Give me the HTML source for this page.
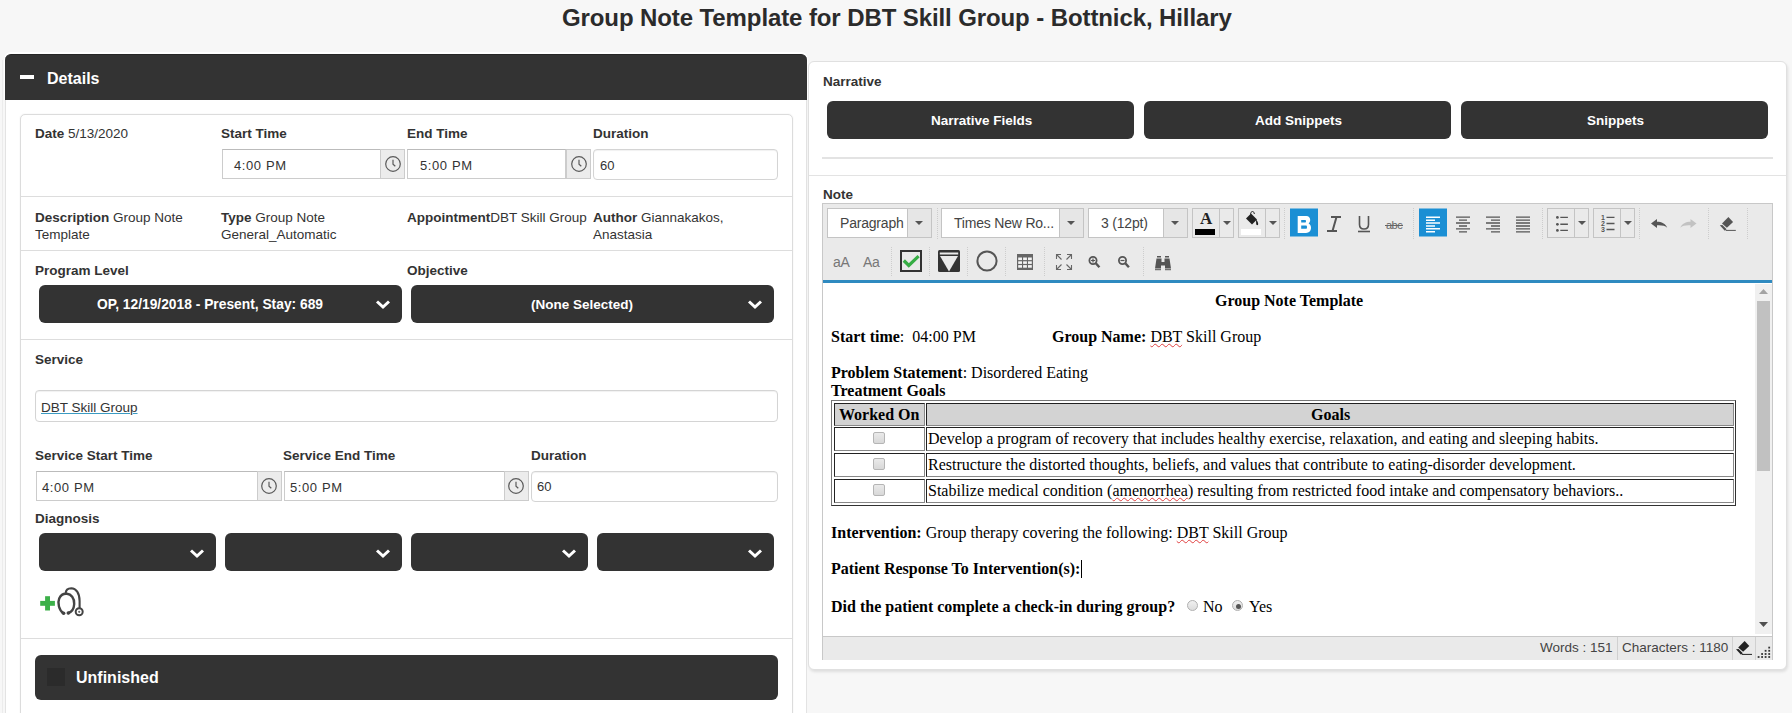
<!DOCTYPE html>
<html><head><meta charset="utf-8">
<style>
*{box-sizing:border-box;margin:0;padding:0}
html,body{width:1792px;height:713px;overflow:hidden;background:#f7f7f7;font-family:"Liberation Sans",sans-serif;color:#333;font-size:13.5px;letter-spacing:0}
.a{position:absolute}
.t{position:absolute;white-space:nowrap;line-height:1}
.b{font-weight:bold}
.title{left:562px;top:6px;font-size:24px;font-weight:bold;color:#2b2b2b;letter-spacing:-0.1px}
.lpanel{left:5px;top:54px;width:802px;height:700px;background:#fff;border:1px solid #e3e3e3;border-radius:6px 6px 0 0}
.lhead{left:5px;top:54px;width:802px;height:46px;background:#333;border-radius:6px 6px 0 0;border-top:1px solid #262626;box-shadow:0 -1px 0 1px #fff}
.card{left:20px;top:114px;width:773px;height:650px;border:1px solid #dcdcdc;border-radius:5px;background:#fff;box-shadow:0 0 2px rgba(0,0,0,.07)}
.sep{position:absolute;height:1px;background:#ddd}
.inp{position:absolute;background:#fff;border:1px solid #ccc;border-top-color:#bbb}
.inpr{position:absolute;background:#fff;border:1px solid #d4d4d4;border-radius:4px;box-shadow:inset 0 1px 1px rgba(0,0,0,.06)}
.addon{position:absolute;background:#ececec;border:1px solid #ccc}
.dd{position:absolute;background:#333;border-radius:6px;color:#fff}
.btn{position:absolute;background:#333;border-radius:6px;color:#fff}
.rpanel{left:808px;top:61px;width:979px;height:609px;background:#fff;border:1px solid #e0e0e0;border-radius:6px;box-shadow:1px 2px 3px rgba(0,0,0,.10)}
.cell{border:1px solid #222;border-right-color:#888;border-bottom-color:#888}
.chk{width:12px;height:12px;border:1px solid #b5b5b5;border-radius:2px;background:linear-gradient(#eaeaea,#d8d8d8)}
.radio{width:11px;height:11px;border:1px solid #b0b0b0;border-radius:50%;background:linear-gradient(#f0f0f0,#dcdcdc)}
.sp{text-decoration:underline wavy #e04040;text-decoration-thickness:1px;text-underline-offset:1px}
.serif{font-family:"Liberation Serif",serif;color:#000;font-size:16px;letter-spacing:0}
</style></head><body>
<div class="t title">Group Note Template for DBT Skill Group - Bottnick, Hillary</div>

<!-- LEFT PANEL -->
<div class="a" style="left:2px;top:60px;width:1px;height:653px;background:#ececec"></div>
<div class="a lpanel"></div>
<div class="a lhead"></div>
<div class="a" style="left:20px;top:75px;width:14px;height:4px;background:#fff"></div>
<div class="t b" style="left:47px;top:71px;font-size:16px;color:#fff;letter-spacing:0">Details</div>

<div class="a card"></div>
<!-- row 1 -->
<div class="t" style="left:35px;top:127px"><b>Date</b> 5/13/2020</div>
<div class="t b" style="left:221px;top:127px">Start Time</div>
<div class="t b" style="left:407px;top:127px">End Time</div>
<div class="t b" style="left:593px;top:127px">Duration</div>
<div class="inp" style="left:222px;top:149px;width:159px;height:30px"></div>
<div class="addon" style="left:380px;top:149px;width:25px;height:30px"></div>
<div class="t" style="left:234px;top:159px;font-size:13px;letter-spacing:0.6px">4:00 PM</div>
<div class="inp" style="left:407px;top:149px;width:159px;height:30px"></div>
<div class="addon" style="left:566px;top:149px;width:25px;height:30px"></div>
<div class="t" style="left:420px;top:159px;font-size:13px;letter-spacing:0.6px">5:00 PM</div>
<div class="inpr" style="left:593px;top:149px;width:185px;height:31px"></div>
<div class="t" style="left:600px;top:159px;font-size:13px">60</div>
<div class="sep" style="left:21px;top:196px;width:771px"></div>
<!-- row 2 -->
<div class="t" style="left:35px;top:209px;line-height:17px"><b>Description</b> Group Note<br>Template</div>
<div class="t" style="left:221px;top:209px;line-height:17px"><b>Type</b> Group Note<br>General_Automatic</div>
<div class="t" style="left:407px;top:209px;line-height:17px"><b>Appointment</b>DBT Skill Group</div>
<div class="t" style="left:593px;top:209px;line-height:17px"><b>Author</b> Giannakakos,<br>Anastasia</div>
<div class="sep" style="left:21px;top:250px;width:771px"></div>
<!-- row 3 -->
<div class="t b" style="left:35px;top:264px">Program Level</div>
<div class="t b" style="left:407px;top:264px">Objective</div>
<div class="dd" style="left:39px;top:285px;width:363px;height:38px"></div>
<div class="t b" style="left:97px;top:298px;color:#fff;font-size:13.8px">OP, 12/19/2018 - Present, Stay: 689</div>
<div class="dd" style="left:411px;top:285px;width:363px;height:38px"></div>
<div class="t b" style="left:531px;top:298px;color:#fff">(None Selected)</div>
<div class="sep" style="left:21px;top:339px;width:771px"></div>
<!-- row 4 -->
<div class="t b" style="left:35px;top:353px">Service</div>
<div class="inpr" style="left:35px;top:390px;width:743px;height:32px"></div>
<div class="t" style="left:41px;top:401px;text-decoration:underline;text-decoration-color:#3b9bc2;color:#333">DBT Skill Group</div>
<div class="t b" style="left:35px;top:449px">Service Start Time</div>
<div class="t b" style="left:283px;top:449px">Service End Time</div>
<div class="t b" style="left:531px;top:449px">Duration</div>
<div class="inp" style="left:36px;top:471px;width:222px;height:30px"></div>
<div class="addon" style="left:257px;top:471px;width:25px;height:30px"></div>
<div class="t" style="left:42px;top:481px;font-size:13px;letter-spacing:0.6px">4:00 PM</div>
<div class="inp" style="left:284px;top:471px;width:221px;height:30px"></div>
<div class="addon" style="left:504px;top:471px;width:25px;height:30px"></div>
<div class="t" style="left:290px;top:481px;font-size:13px;letter-spacing:0.6px">5:00 PM</div>
<div class="inpr" style="left:531px;top:471px;width:247px;height:31px"></div>
<div class="t" style="left:537px;top:480px;font-size:13px">60</div>
<div class="t b" style="left:35px;top:512px">Diagnosis</div>
<div class="dd" style="left:39px;top:533px;width:177px;height:38px"></div>
<div class="dd" style="left:225px;top:533px;width:177px;height:38px"></div>
<div class="dd" style="left:411px;top:533px;width:177px;height:38px"></div>
<div class="dd" style="left:597px;top:533px;width:177px;height:38px"></div>
<div class="sep" style="left:21px;top:638px;width:771px"></div>
<div class="dd" style="left:35px;top:655px;width:743px;height:45px"></div>
<div class="a" style="left:47px;top:668px;width:18px;height:18px;background:#2b2b2b"></div>
<div class="t b" style="left:76px;top:670px;font-size:16px;color:#fff;letter-spacing:0">Unfinished</div>

<!-- icons -->
<svg class="a" style="left:375px;top:298px" width="16" height="12"><path d="M2 3.5L8 9L14 3.5" stroke="#fff" stroke-width="3" fill="none"/></svg>
<svg class="a" style="left:747px;top:298px" width="16" height="12"><path d="M2 3.5L8 9L14 3.5" stroke="#fff" stroke-width="3" fill="none"/></svg>
<svg class="a" style="left:189px;top:547px" width="16" height="12"><path d="M2 3.5L8 9L14 3.5" stroke="#fff" stroke-width="3" fill="none"/></svg>
<svg class="a" style="left:375px;top:547px" width="16" height="12"><path d="M2 3.5L8 9L14 3.5" stroke="#fff" stroke-width="3" fill="none"/></svg>
<svg class="a" style="left:561px;top:547px" width="16" height="12"><path d="M2 3.5L8 9L14 3.5" stroke="#fff" stroke-width="3" fill="none"/></svg>
<svg class="a" style="left:747px;top:547px" width="16" height="12"><path d="M2 3.5L8 9L14 3.5" stroke="#fff" stroke-width="3" fill="none"/></svg>
<svg class="a" style="left:384px;top:155px" width="18" height="18"><circle cx="9" cy="9" r="7.3" fill="none" stroke="#5a5a5a" stroke-width="1.2"/><path d="M9 4.8V9.2L11.3 11.3" fill="none" stroke="#5a5a5a" stroke-width="1.2"/></svg>
<svg class="a" style="left:570px;top:155px" width="18" height="18"><circle cx="9" cy="9" r="7.3" fill="none" stroke="#5a5a5a" stroke-width="1.2"/><path d="M9 4.8V9.2L11.3 11.3" fill="none" stroke="#5a5a5a" stroke-width="1.2"/></svg>
<svg class="a" style="left:260px;top:477px" width="18" height="18"><circle cx="9" cy="9" r="7.3" fill="none" stroke="#5a5a5a" stroke-width="1.2"/><path d="M9 4.8V9.2L11.3 11.3" fill="none" stroke="#5a5a5a" stroke-width="1.2"/></svg>
<svg class="a" style="left:507px;top:477px" width="18" height="18"><circle cx="9" cy="9" r="7.3" fill="none" stroke="#5a5a5a" stroke-width="1.2"/><path d="M9 4.8V9.2L11.3 11.3" fill="none" stroke="#5a5a5a" stroke-width="1.2"/></svg>
<svg class="a" style="left:36px;top:583px" width="52" height="37">
<rect x="4.2" y="17.9" width="14.7" height="4.9" fill="#3cb049"/><rect x="9.1" y="13.2" width="4.9" height="14.3" fill="#3cb049"/>
<path d="M27.5 30.3C23 27.5 21.3 20 23.2 15.5C25 11.5 28.5 10.5 31 10.8C35 11.2 38.5 15 38.2 21C37.9 26 35.5 29 32.5 30" fill="none" stroke="#444" stroke-width="2.4" stroke-linecap="round"/>
<circle cx="27.6" cy="30.2" r="1.8" fill="#444"/><circle cx="32.3" cy="30" r="1.8" fill="#444"/>
<path d="M29.6 10.5C29.8 6.5 32.5 5.2 35.3 5.2C40 5.4 43.6 10 43.6 18V25" fill="none" stroke="#444" stroke-width="2.1"/>
<circle cx="43.2" cy="28.8" r="3.5" fill="none" stroke="#444" stroke-width="2"/><circle cx="43.2" cy="28.8" r="1.1" fill="#666"/>
</svg>

<!-- RIGHT PANEL -->
<div class="a rpanel"></div>
<div class="t b" style="left:823px;top:75px">Narrative</div>
<div class="btn" style="left:827px;top:101px;width:307px;height:38px"></div>
<div class="t b" style="left:931px;top:114px;color:#fff">Narrative Fields</div>
<div class="btn" style="left:1144px;top:101px;width:307px;height:38px"></div>
<div class="t b" style="left:1255px;top:114px;color:#fff">Add Snippets</div>
<div class="btn" style="left:1461px;top:101px;width:307px;height:38px"></div>
<div class="t b" style="left:1587px;top:114px;color:#fff">Snippets</div>
<div class="sep" style="left:822px;top:157px;width:951px;height:2px;background:#e3e3e3"></div>
<div class="sep" style="left:809px;top:175px;width:977px;background:#e3e3e3"></div>
<div class="t b" style="left:823px;top:188px">Note</div>

<!-- editor -->
<div class="a" style="left:822px;top:203px;width:951px;height:457px;border:1px solid #c8c8c8;background:#fff"></div>
<div class="a" style="left:823px;top:204px;width:949px;height:76px;background:#eaeaea"></div>
<div class="a" style="left:823px;top:280px;width:949px;height:3px;background:#2f8ac0"></div>
<div class="a" style="left:823px;top:636px;width:949px;height:24px;background:#eaeaea;border-top:1px solid #c8c8c8"></div>


<!-- toolbar svg -->
<svg class="a" style="left:0;top:0" width="1792" height="713" font-family="Liberation Sans, sans-serif">
<g fill="none" stroke="#c4c4c4" stroke-width="1">
 <!-- paragraph -->
 <rect x="827.5" y="208.5" width="104" height="29" fill="#fff"/>
 <rect x="907.5" y="208.5" width="24" height="29" fill="#e6e6e6"/>
 <rect x="941.5" y="208.5" width="142" height="29" fill="#fff"/>
 <rect x="1059.5" y="208.5" width="24" height="29" fill="#e6e6e6"/>
 <rect x="1088.5" y="208.5" width="99" height="29" fill="#fff"/>
 <rect x="1163.5" y="208.5" width="24" height="29" fill="#e6e6e6"/>
 <rect x="1192.5" y="208.5" width="41" height="29"/>
 <line x1="1219.5" y1="208" x2="1219.5" y2="238"/>
 <rect x="1238.5" y="208.5" width="41" height="29"/>
 <line x1="1265.5" y1="208" x2="1265.5" y2="238"/>
 <rect x="1547.5" y="208.5" width="41" height="29"/>
 <line x1="1574.5" y1="208" x2="1574.5" y2="238"/>
 <rect x="1593.5" y="208.5" width="41" height="29"/>
 <line x1="1620.5" y1="208" x2="1620.5" y2="238"/>
</g>
<g stroke="#cdcdcd" stroke-width="1" stroke-dasharray="1,1">
 <line x1="937.5" y1="208" x2="937.5" y2="240"/>
 <line x1="1284.5" y1="208" x2="1284.5" y2="240"/>
 <line x1="1413.5" y1="208" x2="1413.5" y2="240"/>
 <line x1="1542.5" y1="208" x2="1542.5" y2="240"/>
 <line x1="1639.5" y1="208" x2="1639.5" y2="240"/>
 <line x1="1708.5" y1="208" x2="1708.5" y2="240"/>
 <line x1="1747.5" y1="208" x2="1747.5" y2="240"/>
 <line x1="891.5" y1="247" x2="891.5" y2="276"/>
 <line x1="929.5" y1="247" x2="929.5" y2="276"/>
 <line x1="967.5" y1="247" x2="967.5" y2="276"/>
 <line x1="1005.5" y1="247" x2="1005.5" y2="276"/>
 <line x1="1044.5" y1="247" x2="1044.5" y2="276"/>
 <line x1="1143.5" y1="247" x2="1143.5" y2="276"/>
</g>
<g fill="#555">
 <path d="M915 221h8l-4 4z"/>
 <path d="M1067 221h8l-4 4z"/>
 <path d="M1171 221h8l-4 4z"/>
 <path d="M1223 221h8l-4 4z"/>
 <path d="M1269 221h8l-4 4z"/>
 <path d="M1578 221h8l-4 4z"/>
 <path d="M1624 221h8l-4 4z"/>
</g>
<g font-size="14" fill="#444">
 <text x="840" y="228" letter-spacing="-0.2">Paragraph</text>
 <text x="954" y="228" letter-spacing="-0.2">Times New Ro...</text>
 <text x="1101" y="228" letter-spacing="-0.2">3 (12pt)</text>
</g>
<!-- font color A -->
<text x="1200" y="224" font-family="Liberation Serif, serif" font-weight="bold" font-size="17" fill="#222">A</text>
<rect x="1195" y="229" width="20" height="6" fill="#000"/>
<!-- bucket -->
<g fill="#222">
 <path d="M1246 218.5l5-5 6 6-5 5z"/>
 <path d="M1256 219.5c1.5 1.5 2.2 3 2.2 4.5 0 .8-.5 1.2-1 1.2s-1-.4-1-1.2c0-1.5-.2-2.5-.2-4.5z"/>
 <path d="M1250.5 214.5c0-2 1-3 2-3s1.8 1 1.8 2.5" fill="none" stroke="#222" stroke-width="1"/>
</g>
<rect x="1241" y="229" width="20" height="6" fill="#fff"/>
<!-- bold -->
<rect x="1290" y="208.5" width="28" height="28" fill="#1b8fd4"/>
<path fill="#fff" fill-rule="evenodd" d="M1297.7 216H1306.3C1308.9 216 1310.2 217.8 1310.2 220C1310.2 221.6 1309.6 222.7 1308.6 223.5C1310.2 224.3 1311 225.8 1311 227.8C1311 230.8 1309.2 233 1306 233H1297.7ZM1301.2 220V222.5H1305C1305.6 222.5 1306 222 1306 221.25S1305.6 220 1305 220ZM1301.2 225.6V228.8H1306C1306.6 228.8 1307 228.2 1307 227.2S1306.6 225.6 1306 225.6Z"/>
<!-- italic -->
<g stroke="#555" stroke-width="2" fill="none">
 <path d="M1331 217h10M1327 231h10M1336.5 217l-4 14"/>
</g>
<!-- underline -->
<g stroke="#555" fill="none">
 <path d="M1359.5 216v8.5c0 3 2 4.5 4.5 4.5s4.5-1.5 4.5-4.5V216" stroke-width="1.6"/>
 <path d="M1358 231.5h12" stroke-width="1.6"/>
</g>
<!-- abc -->
<text x="1386" y="229" font-size="11" fill="#666" letter-spacing="-0.5">abc</text>
<line x1="1385" y1="225.5" x2="1403" y2="225.5" stroke="#666" stroke-width="1"/>
<!-- align left -->
<rect x="1419" y="208.5" width="28" height="28" fill="#1b8fd4"/>
<g stroke="#fff" stroke-width="1.5">
 <path d="M1426 217.2h14M1426 220.2h9M1426 223h14M1426 226h9M1426 228.8h14M1426 231.8h9"/>
</g>
<g stroke="#555" stroke-width="1.3">
 <path d="M1456 217.2h14M1459 220.2h8M1456 223h14M1459 226h8M1456 228.8h14M1459 231.8h8"/>
 <path d="M1486 217.2h14M1491 220.2h9M1486 223h14M1491 226h9M1486 228.8h14M1491 231.8h9"/>
 <path d="M1516 217.2h14M1516 220.2h14M1516 223h14M1516 226h14M1516 228.8h14M1516 231.8h14"/>
</g>
<!-- bullet list -->
<g fill="#555">
 <circle cx="1557.4" cy="217.4" r="1.4"/><circle cx="1557.4" cy="224.3" r="1.4"/><circle cx="1557.4" cy="230.4" r="1.4"/>
</g>
<g stroke="#555" stroke-width="1.4">
 <path d="M1560.3 217.4h7.6M1560.3 224.3h7.6M1560.3 230.4h7.6"/>
 <path d="M1606.5 217.4h8M1606.5 223.5h8M1606.5 229.5h8"/>
</g>
<g font-size="7" font-weight="bold" fill="#555">
 <text x="1601" y="220">1</text><text x="1601" y="226">2</text><text x="1601" y="232">3</text>
</g>
<!-- undo redo -->
<path fill="#555" d="M1651 223.5l6-4.6v2.8c4.5 0 8.5 1.8 10.2 6-2.2-2-5.2-2.6-10.2-2.4v2.8z"/>
<path fill="#c2c2c2" d="M1696.5 223.5l-6-4.6v2.8c-4.5 0-8.5 1.8-10.2 6 2.2-2 5.2-2.6 10.2-2.4v2.8z"/>
<!-- eraser -->
<g transform="translate(1715.8 212)" fill="#555"><path d="M12.6 5l4.7 4.9-6.2 5.9-4.9-4.4z"/><path d="M4 13.2l2.6-.3 4.2 4.3-1.8 1.6z"/><path d="M10 18.4h10" stroke="#555" stroke-width="1"/></g>
<!-- row 2 -->
<g font-size="14" fill="#777">
 <text x="833" y="267" letter-spacing="-0.3">aA</text>
 <text x="863" y="267" letter-spacing="-0.3">Aa</text>
</g>
<rect x="901" y="251" width="20" height="20" fill="#e9e9e9" stroke="#333" stroke-width="2"/>
<path d="M903.8 260.5l5 5 9.8-9.3" stroke="#36ad44" stroke-width="3.2" fill="none"/>
<rect x="938" y="250" width="22" height="22" rx="1.5" fill="#333"/>
<path d="M939.8 253.5h18.4" stroke="#e9e9e9" stroke-width="2"/>
<path d="M940 256h18l-9 15.5z" fill="#e9e9e9"/>
<circle cx="987" cy="261" r="9.6" fill="none" stroke="#555" stroke-width="2"/>
<!-- table -->
<g>
 <rect x="1017" y="254" width="16" height="16" fill="#666"/>
 <g fill="#f4f4f4">
  <rect x="1018.2" y="257.5" width="3.8" height="2.6"/><rect x="1023.1" y="257.5" width="3.8" height="2.6"/><rect x="1028" y="257.5" width="3.8" height="2.6"/>
  <rect x="1018.2" y="261.3" width="3.8" height="2.6"/><rect x="1023.1" y="261.3" width="3.8" height="2.6"/><rect x="1028" y="261.3" width="3.8" height="2.6"/>
  <rect x="1018.2" y="265.1" width="3.8" height="2.6"/><rect x="1023.1" y="265.1" width="3.8" height="2.6"/><rect x="1028" y="265.1" width="3.8" height="2.6"/>
 </g>
</g>
<!-- fullscreen -->
<g stroke="#666" stroke-width="1.1" fill="none">
 <path d="M1056.5 259v-4.5h4.5M1056.5 254.5l5 5"/>
 <path d="M1071.5 259v-4.5h-4.5M1071.5 254.5l-5 5"/>
 <path d="M1056.5 265v4.5h4.5M1056.5 269.5l5-5"/>
 <path d="M1071.5 265v4.5h-4.5M1071.5 269.5l-5-5"/>
</g>
<!-- zoom in / out -->
<g stroke="#555" fill="none">
 <circle cx="1093" cy="260.5" r="3.6" stroke-width="1.8"/>
 <path d="M1095.8 263.3l3.6 4" stroke-width="2.4"/>
 <path d="M1091 260.5h4M1093 258.5v4" stroke-width="1.2"/>
 <circle cx="1122.5" cy="260.5" r="3.6" stroke-width="1.8"/>
 <path d="M1125.3 263.3l3.6 4" stroke-width="2.4"/>
 <path d="M1120.5 260.5h4" stroke-width="1.2"/>
</g>
<!-- binoculars -->
<g fill="#555">
 <rect x="1157" y="256" width="4" height="1.5"/><rect x="1165" y="256" width="4" height="1.5"/>
 <path d="M1156.5 258.5h5v3.5h3v-3.5h5l1.5 10h-6v-3h-4v3h-6z"/>
 <rect x="1155" y="269.2" width="6" height="1"/><rect x="1165" y="269.2" width="6" height="1"/>
</g>
</svg>

<!-- editor content -->
<div class="t serif b" style="left:1215px;top:293px">Group Note Template</div>
<div class="t serif" style="left:831px;top:329px"><b>Start time</b>:&nbsp; 04:00 PM</div>
<div class="t serif" style="left:1052px;top:329px"><b>Group Name:</b> <span class="sp">DBT</span> Skill Group</div>
<div class="t serif" style="left:831px;top:365px"><b>Problem Statement</b>: Disordered Eating</div>
<div class="t serif b" style="left:831px;top:383px">Treatment Goals</div>
<!-- table -->
<div class="a" style="left:831px;top:400px;width:905px;height:106px;border:1px solid #777;border-right-color:#333;border-bottom-color:#333"></div>
<div class="a cell" style="left:834px;top:403px;width:91px;height:23px;background:#d3d3d3"></div>
<div class="a cell" style="left:926px;top:403px;width:808px;height:23px;background:#d3d3d3"></div>
<div class="t serif b" style="left:839px;top:407px">Worked On</div>
<div class="t serif b" style="left:1311px;top:407px">Goals</div>
<div class="a cell" style="left:834px;top:427px;width:91px;height:24px"></div>
<div class="a cell" style="left:926px;top:427px;width:808px;height:24px"></div>
<div class="a cell" style="left:834px;top:453px;width:91px;height:24px"></div>
<div class="a cell" style="left:926px;top:453px;width:808px;height:24px"></div>
<div class="a cell" style="left:834px;top:479px;width:91px;height:24px"></div>
<div class="a cell" style="left:926px;top:479px;width:808px;height:24px"></div>
<div class="a chk" style="left:873px;top:432px"></div>
<div class="a chk" style="left:873px;top:458px"></div>
<div class="a chk" style="left:873px;top:484px"></div>
<div class="t serif" style="left:928px;top:431px">Develop a program of recovery that includes healthy exercise, relaxation, and eating and sleeping habits.</div>
<div class="t serif" style="left:928px;top:457px">Restructure the distorted thoughts, beliefs, and values that contribute to eating-disorder development.</div>
<div class="t serif" style="left:928px;top:483px">Stabilize medical condition (<span class="sp">amenorrhea</span>) resulting from restricted food intake and compensatory behaviors..</div>
<div class="t serif" style="left:831px;top:525px"><b>Intervention:</b> Group therapy covering the following: <span class="sp">DBT</span> Skill Group</div>
<div class="t serif b" style="left:831px;top:561px">Patient Response To Intervention(s):</div>
<div class="a" style="left:1081px;top:560px;width:1px;height:18px;background:#000"></div>
<div class="t serif b" style="left:831px;top:599px">Did the patient complete a check-in during group?</div>
<div class="a radio" style="left:1187px;top:600px"></div>
<div class="t serif" style="left:1203px;top:599px">No</div>
<div class="a radio" style="left:1232px;top:600px"><div style="position:absolute;left:3px;top:3px;width:5px;height:5px;border-radius:50%;background:#555"></div></div>
<div class="t serif" style="left:1249px;top:599px">Yes</div>
<!-- scrollbar -->
<div class="a" style="left:1755px;top:284px;width:17px;height:350px;background:#f0f0f0"></div>
<div class="a" style="left:1757px;top:301px;width:13px;height:170px;background:#c1c1c1"></div>
<svg class="a" style="left:1759px;top:289px" width="9" height="6"><path d="M0 5L4.5 0L9 5Z" fill="#a3a3a3"/></svg>
<svg class="a" style="left:1759px;top:622px" width="9" height="6"><path d="M0 0L4.5 5L9 0Z" fill="#505050"/></svg>
<!-- status bar -->
<div class="t" style="left:1540px;top:641px;color:#444">Words : 151</div>
<div class="a" style="left:1617px;top:637px;width:1px;height:23px;background:#d0d0d0"></div>
<div class="t" style="left:1622px;top:641px;color:#444">Characters : 1180</div>
<div class="a" style="left:1732px;top:637px;width:1px;height:23px;background:#d0d0d0"></div>
<div class="a" style="left:1755px;top:637px;width:1px;height:23px;background:#d0d0d0"></div>
<svg class="a" style="left:1732px;top:636px" width="24" height="22"><path d="M12.6 5l4.7 4.9-6.2 5.9-4.9-4.4z" fill="#222"/><path d="M4 13.2l2.6-.3 4.2 4.3-1.8 1.6z" fill="#222"/><path d="M10 18.4h10" stroke="#222" stroke-width="1"/></svg>
<svg class="a" style="left:1756px;top:644px" width="16" height="16"><g fill="#333"><rect x="12.3" y="2.7" width="1.8" height="1.8"/><rect x="8.7" y="5.9" width="1.8" height="1.8"/><rect x="12.3" y="5.9" width="1.8" height="1.8"/><rect x="5.2" y="9.1" width="1.8" height="1.8"/><rect x="8.7" y="9.1" width="1.8" height="1.8"/><rect x="12.3" y="9.1" width="1.8" height="1.8"/><rect x="1.7" y="12.1" width="1.8" height="1.8"/><rect x="5.2" y="12.1" width="1.8" height="1.8"/><rect x="8.7" y="12.1" width="1.8" height="1.8"/><rect x="12.3" y="12.1" width="1.8" height="1.8"/></g></svg>
</body></html>
